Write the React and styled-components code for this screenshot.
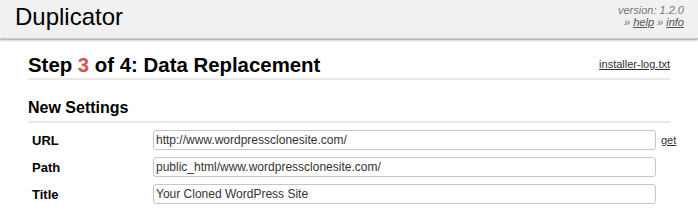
import React from 'react';
import styled, { createGlobalStyle } from 'styled-components';

const GlobalStyle = createGlobalStyle`
  body {
    margin: 0;
    background: #fff;
    font-family: "Liberation Sans", Arial, sans-serif;
    color: #000;
  }
`;

const Header = styled.div`
  display: flex;
  justify-content: space-between;
  align-items: flex-start;
  height: 38px;
  background: #f1f1f1;
  border-bottom: 1px solid #c8c8c8;
  box-shadow: 0 1px 2px #999;
  padding: 0 14px 0 15px;
`;

const Logo = styled.div`
  font-size: 24px;
  line-height: 24px;
  padding-top: 5px;
  color: #000;
`;

const Meta = styled.div`
  text-align: right;
  font-size: 11px;
  line-height: 12px;
  font-style: italic;
  color: #777;
  padding-top: 4px;
  a {
    color: #555;
  }
`;

const Main = styled.div`
  margin: 0 28px;
  width: 642px;
`;

const StepBar = styled.div`
  display: flex;
  justify-content: space-between;
  align-items: flex-end;
  margin-top: 15px;
  padding-bottom: 1px;
  border-bottom: 2px solid #e8e8e8;
`;

const StepTitle = styled.h1`
  margin: 0;
  font-size: 20.4px;
  line-height: 23px;
  font-weight: bold;
`;

const StepNum = styled.span`
  color: #d9534f;
`;

const LogLink = styled.a`
  font-size: 11px;
  color: #333;
  text-decoration: underline;
  margin-bottom: 7px;
`;

const SectionTitle = styled.h2`
  margin: 18px 0 0;
  font-size: 16px;
  line-height: 20px;
  font-weight: bold;
  padding-bottom: 3px;
  border-bottom: 2px solid #e8e8e8;
`;

const Form = styled.div`
  display: flex;
  flex-direction: column;
  gap: 7px;
  margin-top: 7px;
  padding-left: 4px;
`;

const Row = styled.div`
  display: flex;
  align-items: center;
`;

const Label = styled.label`
  flex-shrink: 0;
  width: 121px;
  font-size: 13px;
  font-weight: bold;
`;

const Input = styled.input`
  flex-shrink: 0;
  box-sizing: border-box;
  width: 503px;
  height: 20px;
  padding: 0 2px;
  border: 1px solid #c6c6c6;
  border-radius: 3px;
  font-family: "Liberation Sans", Arial, sans-serif;
  font-size: 12px;
  color: #333;
  background: #fff;
  outline: none;
`;

const Get = styled.a`
  flex-shrink: 0;
  margin-left: 5px;
  font-size: 11px;
  color: #333;
  text-decoration: underline;
`;

const fields = [
  { label: 'URL', value: 'http://www.wordpressclonesite.com/', get: true },
  { label: 'Path', value: 'public_html/www.wordpressclonesite.com/' },
  { label: 'Title', value: 'Your Cloned WordPress Site' },
];

export default function App() {
  return (
    <>
      <GlobalStyle />
      <Header>
        <Logo>Duplicator</Logo>
        <Meta>
          version: 1.2.0
          <br />
          » <a href="#">help</a> » <a href="#">info</a>
        </Meta>
      </Header>
      <Main>
        <StepBar>
          <StepTitle>
            Step <StepNum>3</StepNum> of 4: Data Replacement
          </StepTitle>
          <LogLink href="#">installer-log.txt</LogLink>
        </StepBar>
        <SectionTitle>New Settings</SectionTitle>
        <Form>
          {fields.map((f) => (
            <Row key={f.label}>
              <Label>{f.label}</Label>
              <Input defaultValue={f.value} />
              {f.get && <Get href="#">get</Get>}
            </Row>
          ))}
        </Form>
      </Main>
    </>
  );
}
